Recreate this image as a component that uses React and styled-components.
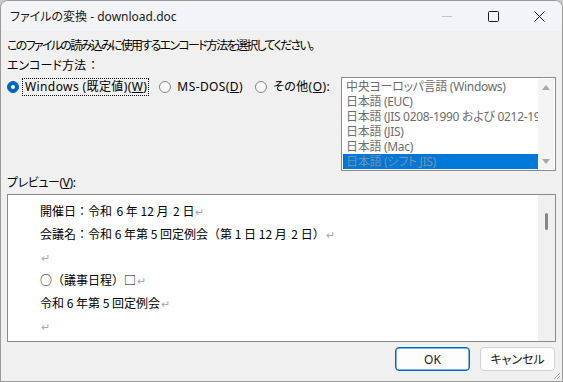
import React from 'react';
import styled, { createGlobalStyle } from 'styled-components';

const GlobalStyle = createGlobalStyle`
  html, body {
    margin: 0;
    padding: 0;
    background: #c9c9c9;
  }
  * {
    box-sizing: border-box;
  }
`;

const Window = styled.div`
  position: relative;
  width: 563px;
  height: 382px;
  display: flex;
  flex-direction: column;
  background: #f0f0f0;
  border: 1px solid #9a9a9a;
  border-radius: 8px 8px 0 0;
  overflow: hidden;
  font-family: "Noto Sans", "Noto Sans CJK JP", sans-serif;
  font-size: 12px;
  font-feature-settings: "palt";
  color: #000;
`;

const TitleBar = styled.div`
  height: 30px;
  display: flex;
  align-items: center;
  background: #f3f4f8;
  flex-shrink: 0;
`;

const Title = styled.div`
  flex: 1;
  padding-left: 9px;
  font-size: 12px;
  color: #1a1a1a;
`;

const CaptionButton = styled.div`
  width: 46px;
  height: 30px;
  display: flex;
  align-items: center;
  justify-content: center;
  color: ${(p) => (p.$disabled ? '#c4c4c4' : '#1a1a1a')};
`;

const Content = styled.div`
  flex: 1;
  display: flex;
  flex-direction: column;
  padding: 0 6px;
`;

const Label = styled.div`
  line-height: 16px;
  margin-top: ${(p) => p.$mt || 0}px;
  letter-spacing: ${(p) => p.$ls || 0}px;
  white-space: nowrap;
`;

const Colon = styled.span`
  font-feature-settings: normal;
  margin-left: 1px;
`;

const Key = styled.span`
  text-decoration: underline;
`;

const EncodingRow = styled.div`
  display: flex;
  align-items: flex-start;
  margin-top: 3px;
`;

const RadioGroup = styled.div`
  display: flex;
  align-items: center;
  height: 20px;
  flex-shrink: 1;
  min-width: 0;
`;

const RadioOption = styled.div`
  display: flex;
  align-items: center;
  gap: 3px;
  margin-right: 10px;
  white-space: nowrap;
`;

const RadioCircle = styled.span`
  width: 12px;
  height: 12px;
  border-radius: 50%;
  flex-shrink: 0;
  background: ${(p) => (p.$checked ? '#0067c0' : '#f7f7f7')};
  border: 1px solid ${(p) => (p.$checked ? '#0067c0' : '#858585')};
  display: flex;
  align-items: center;
  justify-content: center;

  &::after {
    content: '';
    display: ${(p) => (p.$checked ? 'block' : 'none')};
    width: 4px;
    height: 4px;
    border-radius: 50%;
    background: #fff;
  }
`;

const RadioLabel = styled.span`
  padding: 0 1px 0 2px;
  line-height: 16px;
  letter-spacing: 0.4px;
  border: 1px dotted ${(p) => (p.$focused ? '#000' : 'transparent')};
`;

const ListBox = styled.div`
  margin-left: auto;
  flex-shrink: 0;
  width: 215px;
  height: 94px;
  display: flex;
  background: #fff;
  border: 1px solid #8a8a8a;
  padding: 1px;
`;

const ListItems = styled.div`
  flex: 1;
  min-width: 0;
  display: flex;
  flex-direction: column;
  overflow: hidden;
`;

const ListItem = styled.div`
  height: 15px;
  line-height: 15px;
  padding-left: 3px;
  white-space: nowrap;
  overflow: hidden;
  letter-spacing: -0.3px;
  color: ${(p) => (p.$selected ? '#7d8fa3' : '#6d6d6d')};
  background: ${(p) => (p.$selected ? '#0078d7' : 'transparent')};
`;

const ListScroll = styled.div`
  width: 16px;
  flex-shrink: 0;
  background: #f4f4f4;
  display: flex;
  flex-direction: column;
  justify-content: space-between;
  align-items: center;
  padding: 6px 0 5px;
`;

const Arrow = styled.span`
  width: 0;
  height: 0;
  border-left: 4px solid transparent;
  border-right: 4px solid transparent;
  ${(p) =>
    p.$down ? 'border-top: 5px solid #a8a8a8;' : 'border-bottom: 5px solid #a8a8a8;'}
`;

const PreviewBox = styled.div`
  margin-top: 3px;
  height: 148px;
  display: flex;
  background: #fff;
  border: 1px solid #8a8a8a;
`;

const PreviewText = styled.div`
  flex: 1;
  padding: 4px 0 0 32px;
  font-family: "Noto Sans CJK JP", sans-serif;
  font-size: 12px;
  font-feature-settings: normal;
`;

const PreviewLine = styled.div`
  height: 23px;
  line-height: 23px;
  white-space: pre;
`;

const Mark = styled.span`
  color: #a3a9c2;
  font-size: 11px;
  margin-left: 1px;
`;

const SpaceDot = styled.span`
  color: #b0b0b0;
  font-size: 8px;
`;

const PreviewScroll = styled.div`
  width: 17px;
  background: #f0f0f0;
  display: flex;
  justify-content: center;
  padding-top: 18px;
`;

const Thumb = styled.div`
  width: 3px;
  height: 17px;
  border-radius: 2px;
  background: #858585;
`;

const ButtonRow = styled.div`
  display: flex;
  justify-content: flex-end;
  gap: 10px;
  margin-top: 5px;
  padding-right: 1px;
`;

const Button = styled.button`
  width: 75px;
  height: 24px;
  font-family: "Noto Sans", "Noto Sans CJK JP", sans-serif;
  font-size: 12px;
  font-feature-settings: "palt";
  color: #1a1a1a;
  background: #fdfdfd;
  border-radius: 4px;
  border: 1px solid ${(p) => (p.$primary ? '#0067c0' : '#d2d2d2')};
  box-shadow: ${(p) => (p.$primary ? 'inset 0 0 0 0.5px #0067c0' : 'none')};
  padding: 0;
`;

const Grip = styled.svg`
  position: absolute;
  right: 1px;
  bottom: 1px;
`;

const listItems = [
  '中央ヨーロッパ言語 (Windows)',
  '日本語 (EUC)',
  '日本語 (JIS 0208-1990 および 0212-1990)',
  '日本語 (JIS)',
  '日本語 (Mac)',
  '日本語 (シフト JIS)',
];

const Ret = () => <Mark>↵</Mark>;
const Dot = () => <SpaceDot>·</SpaceDot>;

const App = () => {
  return (
    <>
      <GlobalStyle />
      <Window>
        <TitleBar>
          <Title>ファイルの変換 - download.doc</Title>
          <CaptionButton $disabled>
            <svg width="10" height="10" viewBox="0 0 10 10">
              <line x1="0" y1="5.5" x2="10" y2="5.5" stroke="currentColor" strokeWidth="1" />
            </svg>
          </CaptionButton>
          <CaptionButton>
            <svg width="11" height="11" viewBox="0 0 11 11">
              <rect x="0.5" y="0.5" width="10" height="10" rx="1" fill="none" stroke="currentColor" strokeWidth="1" />
            </svg>
          </CaptionButton>
          <CaptionButton>
            <svg width="11" height="11" viewBox="0 0 11 11">
              <path d="M0.5 0.5 L10.5 10.5 M10.5 0.5 L0.5 10.5" stroke="currentColor" strokeWidth="1" />
            </svg>
          </CaptionButton>
        </TitleBar>
        <Content>
          <Label $mt={7} $ls={-1.7}>
            このファイルの読み込みに使用するエンコード方法を選択してください。
          </Label>
          <Label $mt={4}>
            エンコード方法<Colon>：</Colon>
          </Label>
          <EncodingRow>
            <RadioGroup>
              <RadioOption>
                <RadioCircle $checked />
                <RadioLabel $focused>
                  Windows (既定値)(<Key>W</Key>)
                </RadioLabel>
              </RadioOption>
              <RadioOption>
                <RadioCircle />
                <RadioLabel>
                  MS-DOS(<Key>D</Key>)
                </RadioLabel>
              </RadioOption>
              <RadioOption>
                <RadioCircle />
                <RadioLabel>
                  その他(<Key>O</Key>):
                </RadioLabel>
              </RadioOption>
            </RadioGroup>
            <ListBox>
              <ListItems>
                {listItems.map((item, i) => (
                  <ListItem key={item} $selected={i === listItems.length - 1}>
                    {item}
                  </ListItem>
                ))}
              </ListItems>
              <ListScroll>
                <Arrow />
                <Arrow $down />
              </ListScroll>
            </ListBox>
          </EncodingRow>
          <Label $mt={4} $ls={-0.4}>
            プレビュー(<Key>V</Key>):
          </Label>
          <PreviewBox>
            <PreviewText>
              <PreviewLine>
                開催日：令和<Dot />6 年 12 月<Dot />2 日<Ret />
              </PreviewLine>
              <PreviewLine>
                会議名：令和 6 年第 5 回定例会（第 1 日 12 月<Dot />2 日）<Ret />
              </PreviewLine>
              <PreviewLine>
                <Ret />
              </PreviewLine>
              <PreviewLine>
                ○（議事日程）□<Ret />
              </PreviewLine>
              <PreviewLine>
                令和 6 年第 5 回定例会<Ret />
              </PreviewLine>
              <PreviewLine>
                <Ret />
              </PreviewLine>
            </PreviewText>
            <PreviewScroll>
              <Thumb />
            </PreviewScroll>
          </PreviewBox>
          <ButtonRow>
            <Button $primary>OK</Button>
            <Button>キャンセル</Button>
          </ButtonRow>
        </Content>
        <Grip width="8" height="8" viewBox="0 0 8 8">
          <path d="M7 1 L1 7 M7 4 L4 7" stroke="#a0a0a0" strokeWidth="1" />
        </Grip>
      </Window>
    </>
  );
};

export default App;
